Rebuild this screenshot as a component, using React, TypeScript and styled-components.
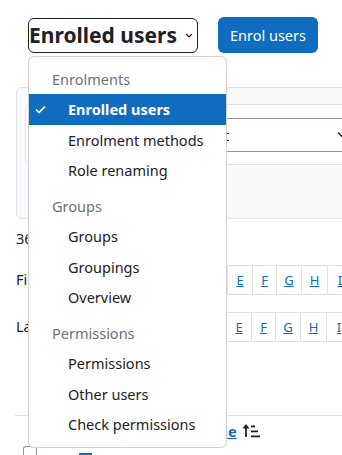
import React from 'react';
import styled, { createGlobalStyle } from 'styled-components';

const GlobalStyle = createGlobalStyle`
  html, body {
    margin: 0;
    padding: 0;
    background: #fff;
    overflow: hidden;
  }
  body {
    font-family: 'Noto Sans', 'Open Sans', sans-serif;
    font-size: 14.5px;
    color: #1d2125;
  }
`;

const Page = styled.div`
  width: 440px;
  height: 455px;
  padding: 17px 0 0 16px;
  box-sizing: border-box;
  position: relative;
`;

const TopBar = styled.div`
  display: flex;
  align-items: center;
  gap: 20px;
  padding-left: 12px;
  height: 36px;
`;

const SelectWrap = styled.div`
  position: relative;
`;

const BigSelect = styled.div`
  display: flex;
  align-items: center;
  height: 35px;
  box-sizing: border-box;
  border: 1px solid #1d2125;
  border-radius: 6px;
  padding: 0 4px 0 0;
  font-size: 21px;
  font-weight: 700;
  color: #1d2125;
  gap: 8px;
`;

const PrimaryButton = styled.button`
  height: 36px;
  width: 100px;
  border: none;
  border-radius: 6px;
  background: #0f6cbf;
  color: #fff;
  font-family: inherit;
  font-size: 14.5px;
  padding: 0;
`;

const Menu = styled.div`
  position: absolute;
  z-index: 10;
  top: 38px;
  left: 0;
  width: 199px;
  box-sizing: border-box;
  background: #fff;
  border: 1px solid rgba(0, 0, 0, 0.18);
  border-radius: 6px;
  padding: 7px 0 7px;
`;

const MenuGroup = styled.div`
  & + & {
    margin-top: 5px;
  }
`;

const MenuHeader = styled.div`
  height: 30.5px;
  line-height: 30.5px;
  padding-left: 23px;
  color: #6a737b;
`;

const MenuItem = styled.div<{ $active?: boolean }>`
  position: relative;
  height: 30.5px;
  line-height: 30.5px;
  padding-left: 39px;
  white-space: nowrap;
  color: ${(p) => (p.$active ? '#fff' : '#1d2125')};
  background: ${(p) => (p.$active ? '#0f6cbf' : 'transparent')};
  font-weight: ${(p) => (p.$active ? 700 : 400)};
`;

const Check = styled.svg`
  position: absolute;
  left: 6px;
  top: 11px;
`;

const FilterCard = styled.div`
  margin-top: 34px;
  height: 132px;
  box-sizing: border-box;
  background: #f8f9fa;
  border: 1px solid #dee2e6;
  border-radius: 6px;
  padding: 16px 0 0 8px;
`;

const FilterRow = styled.div`
  height: 61px;
  box-sizing: border-box;
  background: #fff;
  border: 1px solid #dee2e6;
  border-radius: 6px;
  padding: 13px 0 0 152px;
`;

const FilterSelect = styled.div`
  display: flex;
  align-items: center;
  height: 34px;
  width: 240px;
  box-sizing: border-box;
  border: 1px solid #8f959e;
  border-radius: 6px;
  padding: 0 12px 0 10px;
  gap: 108px;
`;

const Count = styled.div`
  margin-top: 8px;
  height: 22px;
  line-height: 22px;
`;

const InitialsRow = styled.div<{ $top: number }>`
  display: flex;
  align-items: flex-start;
  margin-top: ${(p) => p.$top}px;
`;

const InitialsLabel = styled.div<{ $width: number }>`
  width: ${(p) => p.$width}px;
  padding-top: 3px;
  line-height: 22px;
  flex-shrink: 0;
  overflow: hidden;
  white-space: nowrap;
`;

const Bar = styled.div`
  display: flex;
  border: 1px solid #dee2e6;
  border-right: none;
`;

const Cell = styled.a<{ $w: number }>`
  display: block;
  box-sizing: border-box;
  width: ${(p) => p.$w}px;
  height: 28px;
  line-height: 28px;
  text-align: center;
  border-right: 1px solid #dee2e6;
  color: #0f6cbf;
  text-decoration: underline;
  font-size: 13px;
  flex-shrink: 0;
`;

const Table = styled.div`
  margin-top: 73px;
  margin-left: -1px;
  border-top: 1px solid #dee2e6;
`;

const HeadRow = styled.div`
  display: flex;
  align-items: center;
  height: 30px;
  padding-left: 56px;
  gap: 6px;
`;

const SortLink = styled.a`
  color: #0f6cbf;
  font-weight: 700;
  text-decoration: underline;
  white-space: nowrap;
`;

const BodyRow = styled.div`
  display: flex;
  align-items: flex-start;
  padding: 0 0 0 8px;
  gap: 42px;
`;

const CheckBox = styled.div`
  width: 14px;
  height: 20px;
  border: 1px solid #8f959e;
  border-bottom: none;
  border-radius: 3px 3px 0 0;
  box-sizing: border-box;
`;

const Avatar = styled.div`
  margin-top: 7px;
  width: 13px;
  height: 10px;
  background: #0f6cbf;
`;

const letters = ['All', 'A', 'B', 'C', 'D', 'E', 'F', 'G', 'H', 'I', 'J', 'K'];
const widths = [34, 25, 25, 25, 25, 25, 24, 25, 26, 25, 25, 25];

function Initials({ label, width }: { label: string; width: number }) {
  return (
    <>
      <InitialsLabel $width={width}>{label}</InitialsLabel>
      <Bar>
        {letters.map((l, i) => (
          <Cell key={l} $w={widths[i]}>
            {l}
          </Cell>
        ))}
      </Bar>
    </>
  );
}

const groups = [
  { title: 'Enrolments', items: ['Enrolled users', 'Enrolment methods', 'Role renaming'] },
  { title: 'Groups', items: ['Groups', 'Groupings', 'Overview'] },
  { title: 'Permissions', items: ['Permissions', 'Other users', 'Check permissions'] }
];

export default function App() {
  return (
    <>
      <GlobalStyle />
      <Page>
        <TopBar>
          <SelectWrap>
            <BigSelect>
              Enrolled users
              <svg width="8" height="5" viewBox="0 0 8 5">
                <path d="M1 1 L4 4 L7 1" fill="none" stroke="#1d2125" strokeWidth="1.1" />
              </svg>
            </BigSelect>
            <Menu>
              {groups.map((g) => (
                <MenuGroup key={g.title}>
                  <MenuHeader>{g.title}</MenuHeader>
                  {g.items.map((it) => (
                    <MenuItem key={it} $active={it === 'Enrolled users'}>
                      {it === 'Enrolled users' && (
                        <Check width="11" height="9" viewBox="0 0 11 9">
                          <path d="M1 4.5 L4 7.5 L10 1.5" fill="none" stroke="#fff" strokeWidth="1.6" />
                        </Check>
                      )}
                      {it}
                    </MenuItem>
                  ))}
                </MenuGroup>
              ))}
            </Menu>
          </SelectWrap>
          <PrimaryButton>Enrol users</PrimaryButton>
        </TopBar>

        <FilterCard>
          <FilterRow>
            <FilterSelect>
              <span>Select</span>
              <svg width="12" height="8" viewBox="0 0 12 8">
                <path d="M1 1.5 L6 6.5 L11 1.5" fill="none" stroke="#1d2125" strokeWidth="1.5" />
              </svg>
            </FilterSelect>
          </FilterRow>
        </FilterCard>

        <Count>36 participants found</Count>

        <InitialsRow $top={16}>
          <Initials label="First name" width={77} />
        </InitialsRow>
        <InitialsRow $top={17}>
          <Initials label="Last name" width={76} />
        </InitialsRow>

        <Table>
          <HeadRow>
            <SortLink>First name / Last name</SortLink>
            <svg width="17" height="14" viewBox="0 0 17 14">
              <path d="M3 13 V2 M0.5 4.5 L3 1.5 L5.5 4.5" fill="none" stroke="#1d2125" strokeWidth="1.8" />
              <rect x="8" y="1.5" width="4" height="1.8" fill="#1d2125" />
              <rect x="8" y="6.5" width="7" height="1.8" fill="#1d2125" />
              <rect x="8" y="11.5" width="9" height="1.8" fill="#1d2125" />
            </svg>
          </HeadRow>
          <BodyRow>
            <CheckBox />
            <Avatar />
          </BodyRow>
        </Table>
      </Page>
    </>
  );
}
